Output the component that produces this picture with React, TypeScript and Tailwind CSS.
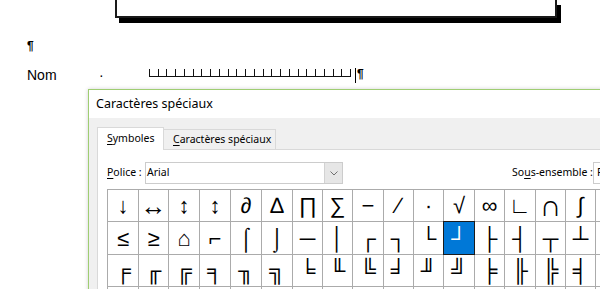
const rows: string[] = [
  "↓↔↕↕∂∆∏∑−∕∙√∞∟∩∫≈",
  "≤≥⌂⌐⌠⌡─│┌┐└┘├┤┬┴┼",
  "╒╓╔╕╖╗╘╙╚╛╜╝╞╟╠╡╢",
  "╣╤╥╦╧╨╩╪╫╬▀▄█▌▐░▒",
];

const selected = { row: 1, col: 11 };

function Comb() {
  const ticks = Array.from({ length: 24 }, (_, i) => Math.round(i * (201 / 23)) + 0.5);
  return (
    <svg width="203" height="10" className="mt-[1px] shrink-0" shapeRendering="crispEdges">
      <line x1="0" y1="8.5" x2="202" y2="8.5" stroke="#111" strokeWidth="1" />
      {ticks.map((x) => (
        <line key={x} x1={x} y1="1" x2={x} y2="9" stroke="#111" strokeWidth="1" />
      ))}
    </svg>
  );
}

function Chevron() {
  return (
    <svg width="8" height="5" viewBox="0 0 8 5">
      <path d="M0.5 0.5 L4 4 L7.5 0.5" fill="none" stroke="#707070" strokeWidth="1" />
    </svg>
  );
}

function SymbolGrid() {
  return (
    <div className="grid w-fit grid-cols-[30px_29px_30px_30px_30px_30px_29px_29px_30px_29px_29px_30px_29px_30px_29px_29px_30px] grid-rows-[31px_32px_31px_32px] gap-px border-l border-t border-[#ababab] bg-[#ababab] font-['Liberation_Sans','DejaVu_Sans',sans-serif] text-[22px]">
      {rows.map((row, r) =>
        Array.from(row).map((ch, c) => {
          const isSel = r === selected.row && c === selected.col;
          return (
            <div
              key={`${r}-${c}`}
              className={
                isSel
                  ? "relative z-10 flex items-center justify-center bg-[#0078d7] text-white ring-1 ring-[#1b1b1b]"
                  : "flex items-center justify-center bg-white text-black"
              }
            >
              {ch === "∩" ? (
                <span className="text-[30px] leading-none">∩</span>
              ) : ch === "↔" ? (
                <span className="text-[26px] leading-none">↔</span>
              ) : (
                ch
              )}
            </div>
          );
        }),
      )}
    </div>
  );
}

function Dialog() {
  return (
    <div className="absolute left-[88px] top-[89px] h-[240px] w-[560px] border border-[#9fcd72] bg-[#f0f0f0] font-['Noto_Sans','Open_Sans',sans-serif] text-black shadow-[0_0_4px_rgba(0,0,0,0.18)]">
      <div className="flex h-[28px] items-center bg-white pl-[7px] text-[12.5px]">
        Caractères spéciaux
      </div>

      <div className="pl-[8px] pt-[9px]">
        <div className="flex h-[22px] items-end text-[10.5px]">
          <div className="relative z-10 -mb-px flex h-[23px] w-[67px] shrink-0 items-center border-x border-t border-[#d9d9d9] bg-white pl-[9px]">
            <span>
              <u className="underline-offset-2">S</u>ymboles
            </span>
          </div>
          <div className="-ml-px flex h-[20px] w-[113px] shrink-0 items-center border-x border-t border-[#d9d9d9] bg-[#f0f0f0] pl-[9px]">
            <span className="whitespace-nowrap">
              <u className="underline-offset-2">C</u>aractères spéciaux
            </span>
          </div>
        </div>

        <div className="h-[200px] border-l border-t border-[#d9d9d9] bg-white pl-[9px] pt-[12px]">
          <div className="flex h-[22px] w-max items-center text-[10.5px]">
            <span className="w-[38px] shrink-0 whitespace-nowrap">
              <u className="underline-offset-2">P</u>olice :
            </span>
            <div className="flex h-[22px] w-[198px] shrink-0 items-stretch border border-[#cccccc]">
              <span className="flex flex-1 items-center pl-[1px]">Arial</span>
              <span className="flex w-[18px] items-center justify-center border-l border-[#d2d2d2] bg-[#e6e6e6]">
                <Chevron />
              </span>
            </div>
            <span className="ml-[169px] w-[81px] shrink-0 whitespace-nowrap">
              So<u className="underline-offset-2">u</u>s-ensemble :
            </span>
            <div className="flex h-[22px] w-[140px] shrink-0 items-center border border-[#cccccc] pl-[3px]">
              Filets
            </div>
          </div>

          <div className="mt-[5px]">
            <SymbolGrid />
          </div>
        </div>
      </div>
    </div>
  );
}

export default function App() {
  return (
    <div className="relative h-[289px] w-[600px] overflow-hidden bg-white font-['Liberation_Sans',Arial,sans-serif] text-black">
      <div className="ml-[115px] h-[18px] w-[442px] border-x-2 border-b-2 border-[#1a1a1a] shadow-[4px_5px_0_0_#000]" />

      <p className="mt-[21px] pl-[27px] text-[12px] font-bold leading-[14px]">¶</p>

      <div className="mt-[14px] flex h-[16px] items-start pl-[27px] text-[14px] leading-[16px]">
        <span className="w-[72px]">Nom</span>
        <span className="w-[50px]">·</span>
        <Comb />
        <span className="ml-[3px] mt-[1px] h-[15px] w-px bg-black" />
        <span className="ml-px text-[12px] font-bold leading-[14px]">¶</span>
      </div>

      <Dialog />
    </div>
  );
}
